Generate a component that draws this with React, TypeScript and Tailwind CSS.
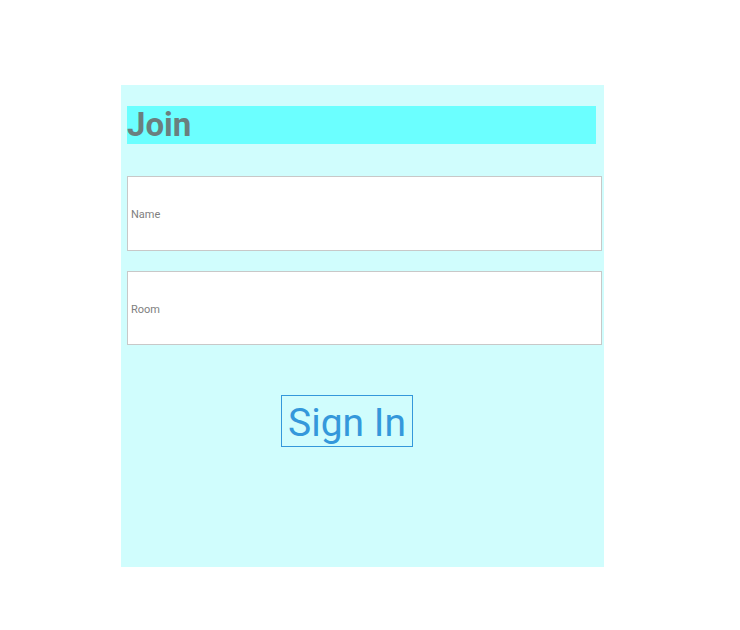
export default function App() {
  return (
    <div className="min-h-screen bg-white font-['Roboto',sans-serif]">
      <div className="pt-[85px] pl-[121px]">
        <div className="w-[483px] h-[482px] bg-[#d0fdfd] pt-[21px] pl-[6px]">
          <h1 className="w-[469px] h-[38px] bg-[#6bffff] text-[33px] leading-[38px] font-bold text-[#6a7f7f]">
            Join
          </h1>
          <div className="mt-[32px] flex flex-col gap-[20px]">
            <input
              placeholder="Name"
              className="w-[475px] h-[75px] bg-white border border-[#c8c8c8] pt-[2px] px-[3px] text-[11px] text-[#555] placeholder:text-[#808080] outline-none"
            />
            <input
              placeholder="Room"
              className="w-[475px] h-[74px] bg-white border border-[#c8c8c8] pt-[2px] px-[3px] text-[11px] text-[#555] placeholder:text-[#808080] outline-none"
            />
          </div>
          <button className="mt-[50px] ml-[154px] w-[132px] h-[52px] border border-[#3498db] pt-[4px] text-[39px] leading-none text-[#3498db]">
            Sign In
          </button>
        </div>
      </div>
    </div>
  );
}
